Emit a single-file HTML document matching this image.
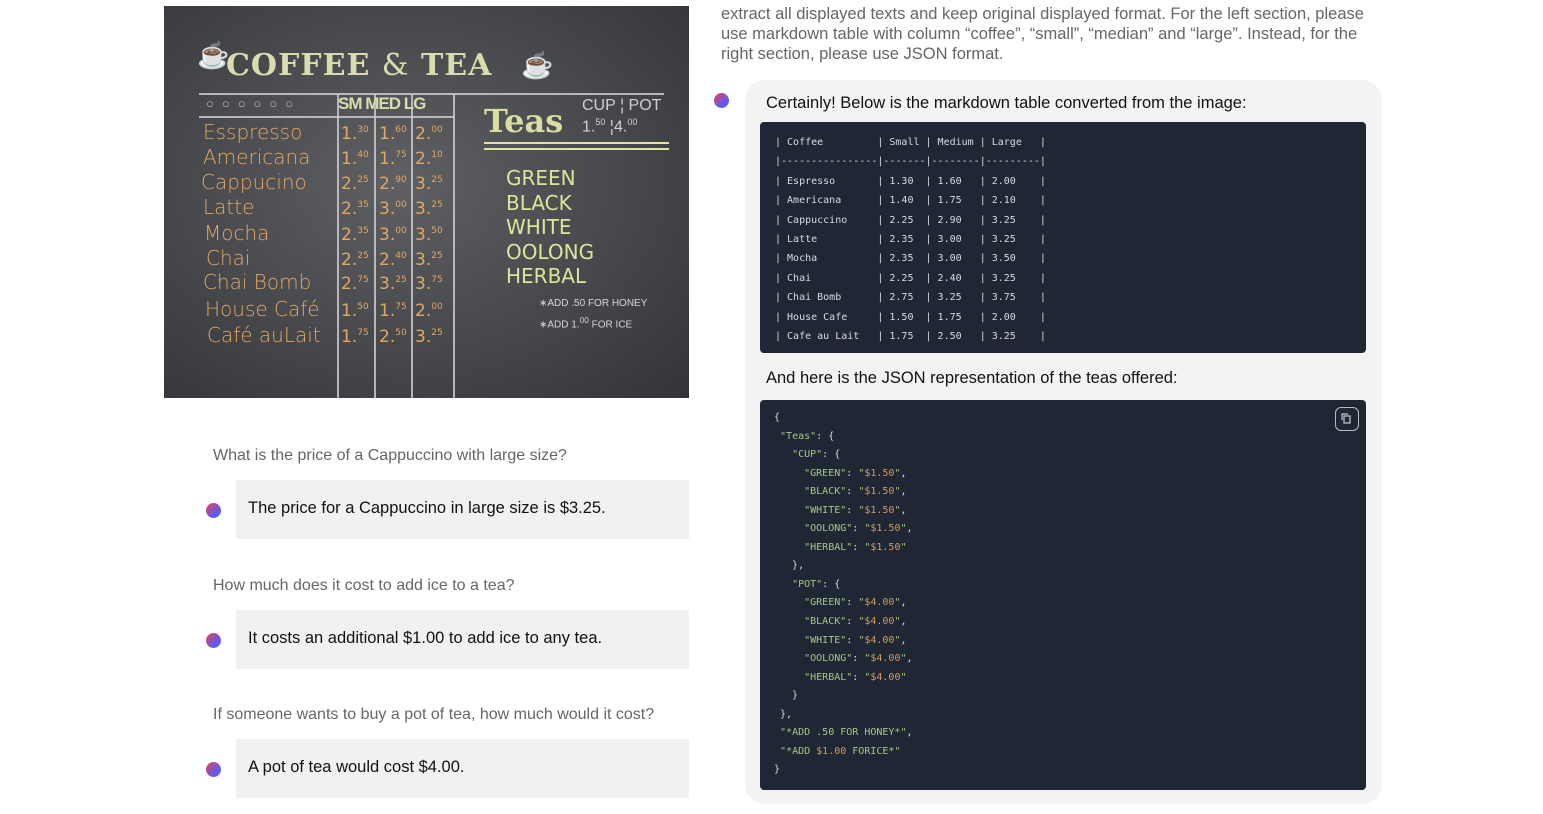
<!DOCTYPE html>
<html><head><meta charset="utf-8"><style>
*{margin:0;padding:0;box-sizing:border-box}
body{width:1543px;height:814px;background:#fff;position:relative;overflow:hidden;font-family:"Segoe UI","Liberation Sans",sans-serif}
.abs{position:absolute}
.board{left:164px;top:6px;width:525px;height:392px;background:radial-gradient(ellipse at 45% 45%,#5e6064 0%,#4a4c50 45%,#323437 100%);overflow:hidden}
.board div{position:absolute;white-space:nowrap}
.cf{color:#e3a862;font-family:"DejaVu Sans",sans-serif;font-size:20px;font-weight:300}
.pr{color:#e3a862;font-family:"DejaVu Sans",sans-serif;font-size:17px;line-height:20px}
.pr sup{font-size:9px;line-height:0;vertical-align:7px}
.tea{color:#dfe49a;font-family:"DejaVu Sans",sans-serif;font-size:20px}
.ln{background:#c9c9cf;opacity:.85}
.q{color:#666;font-size:16px}
.ans{left:236px;width:453px;height:59px;background:#f1f1f1;font-size:16.5px;color:#111;padding:19px 0 0 12px}
.dot{width:15px;height:15px;border-radius:50%;background:linear-gradient(135deg,#f0405a,#5a5cf0 70%)}
.code{background:#1f2735;border-radius:4px;font-family:"DejaVu Sans Mono","Liberation Mono",monospace;font-size:10px;color:#d8dbe0;white-space:pre}
.k{color:#a4c97f}.v{color:#d49a5e}
</style></head><body>
<div class="abs board">
 <div style="left:33px;top:34px;color:#d9a05a;font-size:26px">☕</div>
 <div style="left:62px;top:42px;color:#dadcae;font-family:'DejaVu Serif',serif;font-size:30px;font-weight:bold;letter-spacing:1px">COFFEE <span style="font-weight:normal">&amp;</span> TEA</div>
 <div style="left:357px;top:44px;color:#d9a05a;font-size:26px">☕</div>
 <div class="ln" style="left:35px;top:87px;width:465px;height:2px"></div>
 <div class="ln" style="left:35px;top:110px;width:255px;height:2px"></div>
 <div class="ln" style="left:173px;top:88px;width:2px;height:304px"></div>
 <div class="ln" style="left:210px;top:88px;width:2px;height:304px"></div>
 <div class="ln" style="left:247px;top:88px;width:2px;height:304px"></div>
 <div class="ln" style="left:289px;top:88px;width:2px;height:304px"></div>
 <div style="left:42px;top:90px;color:#bfc0c6;font-size:13px;letter-spacing:8px">○○○○○○</div>
 <div style="left:174px;top:88px;color:#dadcae;font-size:17px;font-weight:bold;letter-spacing:-1px">SM MED LG</div>
 <div class="cf" style="left:39px;top:114px">Esspresso</div>
 <div class="cf" style="left:39px;top:139px">Americana</div>
 <div class="cf" style="left:37px;top:164px">Cappucino</div>
 <div class="cf" style="left:39px;top:189px">Latte</div>
 <div class="cf" style="left:40px;top:215px">Mocha</div>
 <div class="cf" style="left:42px;top:240px">Chai</div>
 <div class="cf" style="left:39px;top:264px">Chai Bomb</div>
 <div class="cf" style="left:41px;top:291px">House Café</div>
 <div class="cf" style="left:43px;top:317px">Café auLait</div>

 <div class="pr" style="left:177px;top:118px">1.<sup>30</sup></div><div class="pr" style="left:215px;top:118px">1.<sup>60</sup></div><div class="pr" style="left:251px;top:118px">2.<sup>00</sup></div>
 <div class="pr" style="left:177px;top:143px">1.<sup>40</sup></div><div class="pr" style="left:215px;top:143px">1.<sup>75</sup></div><div class="pr" style="left:251px;top:143px">2.<sup>10</sup></div>
 <div class="pr" style="left:177px;top:168px">2.<sup>25</sup></div><div class="pr" style="left:215px;top:168px">2.<sup>90</sup></div><div class="pr" style="left:251px;top:168px">3.<sup>25</sup></div>
 <div class="pr" style="left:177px;top:193px">2.<sup>35</sup></div><div class="pr" style="left:215px;top:193px">3.<sup>00</sup></div><div class="pr" style="left:251px;top:193px">3.<sup>25</sup></div>
 <div class="pr" style="left:177px;top:219px">2.<sup>35</sup></div><div class="pr" style="left:215px;top:219px">3.<sup>00</sup></div><div class="pr" style="left:251px;top:219px">3.<sup>50</sup></div>
 <div class="pr" style="left:177px;top:244px">2.<sup>25</sup></div><div class="pr" style="left:215px;top:244px">2.<sup>40</sup></div><div class="pr" style="left:251px;top:244px">3.<sup>25</sup></div>
 <div class="pr" style="left:177px;top:268px">2.<sup>75</sup></div><div class="pr" style="left:215px;top:268px">3.<sup>25</sup></div><div class="pr" style="left:251px;top:268px">3.<sup>75</sup></div>
 <div class="pr" style="left:177px;top:295px">1.<sup>50</sup></div><div class="pr" style="left:215px;top:295px">1.<sup>75</sup></div><div class="pr" style="left:251px;top:295px">2.<sup>00</sup></div>
 <div class="pr" style="left:177px;top:321px">1.<sup>75</sup></div><div class="pr" style="left:215px;top:321px">2.<sup>50</sup></div><div class="pr" style="left:251px;top:321px">3.<sup>25</sup></div>

 <div style="left:320px;top:96px;color:#dadca0;font-family:'DejaVu Serif',serif;font-size:32px;font-weight:bold">Teas</div>
 <div style="left:418px;top:92px;color:#d0d0d0;font-size:16px;line-height:16px">CUP ¦ POT<br>1.<sup style="font-size:9px">50</sup> ¦4.<sup style="font-size:9px">00</sup></div>
 <div style="left:320px;top:136px;width:185px;height:2px;background:#e2e49a"></div>
 <div style="left:320px;top:142px;width:185px;height:2px;background:#e2e49a"></div>
 <div class="tea" style="left:342px;top:160px;line-height:24.5px">GREEN<br>BLACK<br>WHITE<br>OOLONG<br>HERBAL</div>
 <div style="left:375px;top:290px;color:#d6d6d6;font-size:10px;line-height:16px">∗ADD .50 FOR HONEY<br>∗ADD 1.<sup>00</sup> FOR ICE</div>
</div>

<div class="abs q" style="left:213px;top:447px">What is the price of a Cappuccino with large size?</div>
<div class="abs dot" style="left:206px;top:503px"></div>
<div class="abs ans" style="top:480px">The price for a Cappuccino in large size is $3.25.</div>
<div class="abs q" style="left:213px;top:577px">How much does it cost to add ice to a tea?</div>
<div class="abs dot" style="left:206px;top:633px"></div>
<div class="abs ans" style="top:610px">It costs an additional $1.00 to add ice to any tea.</div>
<div class="abs q" style="left:213px;top:706px">If someone wants to buy a pot of tea, how much would it cost?</div>
<div class="abs dot" style="left:206px;top:762px"></div>
<div class="abs ans" style="top:739px">A pot of tea would cost $4.00.</div>

<div class="abs" style="left:721px;top:4px;width:665px;color:#666;font-size:16.5px;line-height:20px">extract all displayed texts and keep original displayed format. For the left section, please use markdown table with column “coffee”, “small”, “median” and “large”. Instead, for the right section, please use JSON format.</div>
<div class="abs dot" style="left:714px;top:93px"></div>
<div class="abs" style="left:745px;top:80px;width:637px;height:724px;background:#f3f3f3;border-radius:20px"></div>
<div class="abs" style="left:766px;top:94px;font-size:16.5px;color:#111">Certainly! Below is the markdown table converted from the image:</div>
<div class="abs code" style="left:760px;top:122px;width:606px;height:231px;padding:11px 0 0 15px;line-height:19.4px">| Coffee         | Small | Medium | Large   |
|----------------|-------|--------|---------|
| Espresso       | 1.30  | 1.60   | 2.00    |
| Americana      | 1.40  | 1.75   | 2.10    |
| Cappuccino     | 2.25  | 2.90   | 3.25    |
| Latte          | 2.35  | 3.00   | 3.25    |
| Mocha          | 2.35  | 3.00   | 3.50    |
| Chai           | 2.25  | 2.40   | 3.25    |
| Chai Bomb      | 2.75  | 3.25   | 3.75    |
| House Cafe     | 1.50  | 1.75   | 2.00    |
| Cafe au Lait   | 1.75  | 2.50   | 3.25    |</div>
<div class="abs" style="left:766px;top:369px;font-size:16.5px;color:#111">And here is the JSON representation of the teas offered:</div>
<div class="abs code" style="left:760px;top:400px;width:606px;height:390px;padding:9px 0 0 14px;line-height:18.55px">{
 <span class="k">"Teas"</span>: {
   <span class="k">"CUP"</span>: {
     <span class="k">"GREEN"</span>: <span class="k">"</span><span class="v">$1.50</span><span class="k">"</span>,
     <span class="k">"BLACK"</span>: <span class="k">"</span><span class="v">$1.50</span><span class="k">"</span>,
     <span class="k">"WHITE"</span>: <span class="k">"</span><span class="v">$1.50</span><span class="k">"</span>,
     <span class="k">"OOLONG"</span>: <span class="k">"</span><span class="v">$1.50</span><span class="k">"</span>,
     <span class="k">"HERBAL"</span>: <span class="k">"</span><span class="v">$1.50</span><span class="k">"</span>
   },
   <span class="k">"POT"</span>: {
     <span class="k">"GREEN"</span>: <span class="k">"</span><span class="v">$4.00</span><span class="k">"</span>,
     <span class="k">"BLACK"</span>: <span class="k">"</span><span class="v">$4.00</span><span class="k">"</span>,
     <span class="k">"WHITE"</span>: <span class="k">"</span><span class="v">$4.00</span><span class="k">"</span>,
     <span class="k">"OOLONG"</span>: <span class="k">"</span><span class="v">$4.00</span><span class="k">"</span>,
     <span class="k">"HERBAL"</span>: <span class="k">"</span><span class="v">$4.00</span><span class="k">"</span>
   }
 },
 <span class="k">"*ADD .50 FOR HONEY*"</span>,
 <span class="k">"*ADD </span><span class="v">$1.00</span><span class="k"> FORICE*"</span>
}</div>
<div class="abs" style="left:1335px;top:407px;width:24px;height:24px;border:1.5px solid #b8bcc4;border-radius:6px">
 <svg width="21" height="21" viewBox="0 0 21 21"><rect x="8" y="8" width="6" height="7" fill="none" stroke="#c8ccd4" stroke-width="1.2"/><path d="M6 12V6h6" fill="none" stroke="#c8ccd4" stroke-width="1.2"/></svg>
</div>
</body></html>
